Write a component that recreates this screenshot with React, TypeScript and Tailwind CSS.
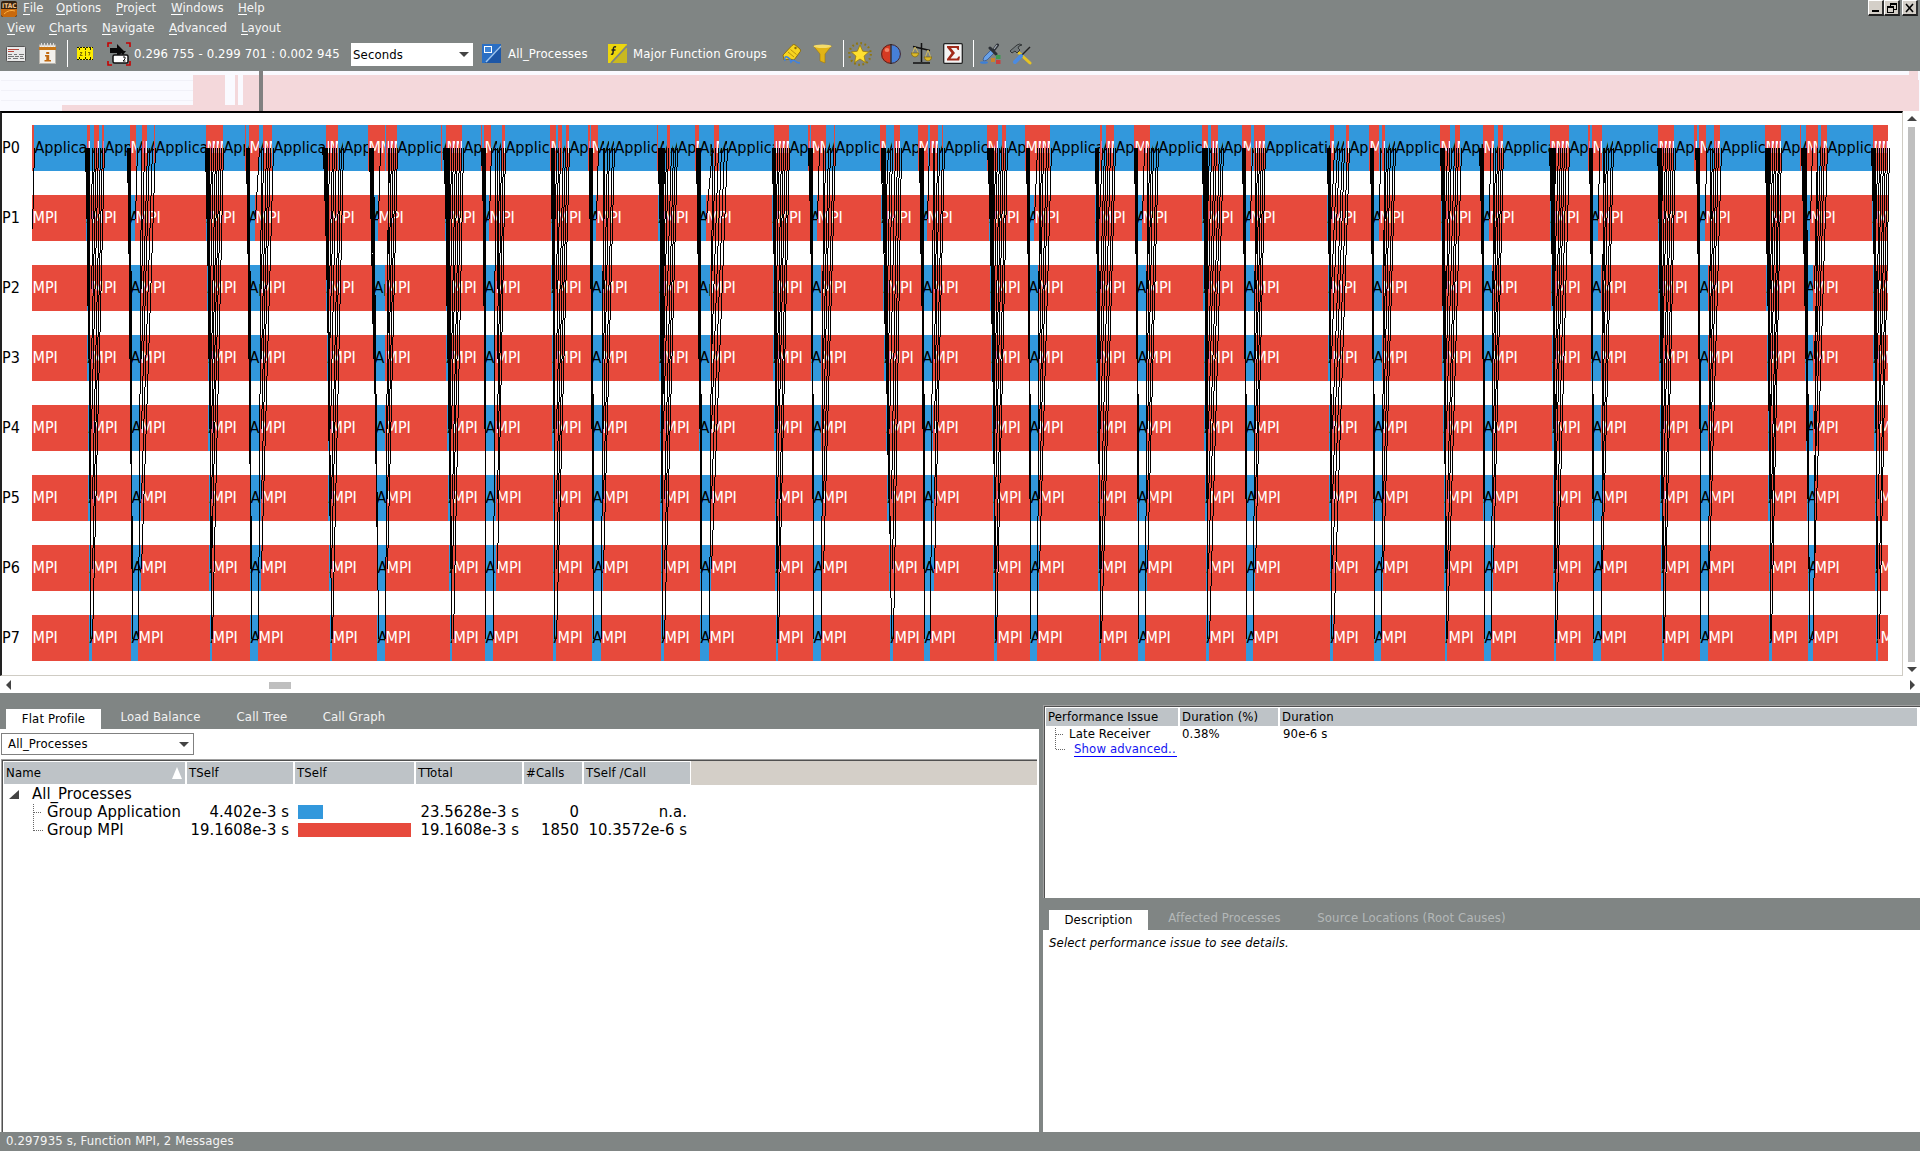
import React from "react";

const RED = "#e74a3c";
const BLUE = "#3298dc";

/* Chart data is expressed in thirds of a pixel along the time axis. */
type Burst = {
  wide?: boolean;
  s: [number, number]; // send bundle on P0
  b: [number, number]; // arrival on P1 .. P7
  r: [number, number]; // returning messages on P0
  c: [number, number]; // departure on P1 .. P7
  p1?: [number, number];
  p7?: [number, number];
};

const n = (o: number, s0: number, s1: number, b0: number, b1: number, r0: number, r1: number, c0: number, c1: number): Burst => ({
  s: [o + s0, o + s1], b: [o + b0, o + b1], r: [o + r0, o + r1], c: [o + c0, o + c1],
});
const w = (o: number, s0: number, s1: number, b0: number, b1: number, p1a: number, p1b: number, p7a: number, p7b: number, r0: number, r1: number, c: number): Burst => ({
  wide: true, s: [o + s0, o + s1], b: [o + b0, o + b1], p1: [o + p1a, o + p1b], p7: [o + p7a, o + p7b], r: [o + r0, o + r1], c: [o + c, o + c],
});

const bursts: Burst[] = [
  n(0, 254, 268, 262, 271, 275, 312, 272, 276),
  w(0, 380, 390, 387, 395, 410, 406, 424, 415, 432, 464, 424),
  n(0, 614, 628, 622, 633, 634, 670, 630, 635),
  w(0, 737, 747, 742, 752, 778, 764, 782, 773, 790, 818, 784),
  n(0, 966, 982, 980, 992, 988, 1030, 985, 995),
  w(0, 1106, 1118, 1114, 1133, 1140, 1134, 1163, 1154, 1166, 1192, 1160),
  n(0, 1328, 1348, 1337, 1352, 1352, 1388, 1350, 1358),
  w(1440, 4, 14, 10, 16, 33, 27, 46, 40, 52, 75, 50),
  n(1440, 212, 222, 216, 223, 228, 268, 226, 229),
  w(1440, 326, 336, 330, 338, 355, 349, 370, 363, 372, 402, 370),
  n(1440, 534, 548, 538, 547, 553, 590, 548, 552),
  w(1440, 648, 660, 652, 662, 695, 678, 697, 688, 705, 740, 694),
  n(1440, 875, 886, 880, 890, 892, 928, 888, 894),
  w(1440, 985, 996, 990, 1000, 1018, 1012, 1030, 1022, 1036, 1066, 1028),
  n(1440, 1203, 1215, 1206, 1234, 1225, 1262, 1216, 1240),
  w(1440, 1316, 1328, 1322, 1332, 1348, 1342, 1358, 1350, 1362, 1392, 1362),
  n(2880, 82, 100, 90, 106, 104, 140, 102, 108),
  w(2880, 198, 206, 202, 211, 230, 222, 238, 230, 242, 272, 238),
  n(2880, 404, 414, 408, 420, 426, 464, 418, 424),
  w(2880, 521, 531, 526, 534, 552, 546, 562, 555, 566, 594, 562),
  n(2880, 726, 742, 730, 742, 747, 790, 742, 746),
  w(2880, 845, 855, 850, 859, 875, 871, 886, 879, 890, 916, 886),
  n(2880, 1100, 1110, 1104, 1114, 1122, 1168, 1112, 1118),
  w(2880, 1229, 1239, 1234, 1242, 1260, 1256, 1272, 1264, 1278, 1304, 1270),
  n(4320, 0, 12, 6, 18, 20, 62, 16, 22),
  w(4320, 118, 130, 124, 132, 150, 146, 160, 154, 166, 190, 160),
  n(4320, 328, 342, 334, 345, 346, 386, 342, 348),
  w(4320, 446, 456, 450, 459, 478, 474, 488, 482, 492, 518, 487),
  n(4320, 652, 664, 656, 668, 668, 704, 664, 672),
  w(4320, 766, 778, 774, 781, 798, 795, 810, 803, 815, 842, 808),
  n(4320, 974, 986, 980, 991, 990, 1024, 988, 994),
  w(4320, 1084, 1098, 1090, 1106, 1115, 1110, 1130, 1120, 1132, 1160, 1122),
  n(4320, 1294, 1306, 1300, 1310, 1312, 1346, 1308, 1318),
];

const p0Red: [number, number][] = [
  ...([[96, 101], [261, 270], [282, 298], [306, 312], [390, 408], [426, 441], [461, 465], [618, 669], [736, 738], [747, 777], [789, 816], [978, 1014], [1104, 1155], [1158, 1191], [1323, 1326], [1338, 1386]] as [number, number][]),
  ...([[3, 5], [12, 33], [66, 75], [210, 228], [234, 246], [258, 267], [324, 330], [333, 354], [531, 534], [561, 570], [645, 657], [702, 717], [882, 927], [984, 990], [993, 1038], [1062, 1065], [1200, 1218], [1242, 1260], [1314, 1344], [1350, 1374], [1386, 1389]].map(([a, b]) => [a + 1440, b + 1440]) as [number, number][]),
  ...([[81, 114], [126, 138], [195, 270], [420, 426], [438, 462], [522, 570], [726, 744], [753, 774], [846, 873], [882, 915], [1110, 1122], [1158, 1167], [1227, 1257], [1266, 1275]].map(([a, b]) => [a + 2880, b + 2880]) as [number, number][]),
  ...([[0, 30], [45, 60], [129, 162], [174, 189], [330, 387], [444, 450], [456, 486], [654, 702], [762, 771], [777, 798], [822, 840], [975, 1023], [1080, 1084], [1098, 1134], [1143, 1161], [1299, 1344]].map(([a, b]) => [a + 4320, b + 4320]) as [number, number][]),
];

const T0 = 96;
const T1 = 5664;
const lerp = (a: number, b: number, t: number) => a + (b - a) * t;
const px = (v: number) => Math.round(v / 3);

type Piece = { x: number; e: number; red: boolean; label: boolean };

function processZero(): Piece[] {
  const isRed = (v: number) => p0Red.some(([a, b]) => v >= a && v < b);
  const cuts = new Set<number>([T0, T1]);
  p0Red.forEach(([a, b]) => { cuts.add(a); cuts.add(b); });
  bursts.forEach((q) => {
    const stops = q.wide ? 3 : 4;
    for (let i = 0; i < stops; i++) cuts.add(Math.round(lerp(q.r[0], q.r[1], i / (stops - 1))));
    if (q.p1) cuts.add(q.p1[0]);
  });
  const list = [...cuts].filter((v) => v >= T0 && v <= T1).sort((a, b) => a - b);
  const out: Piece[] = [];
  for (let i = 0; i < list.length - 1; i++) {
    out.push({ x: list[i], e: list[i + 1], red: isRed(list[i]), label: list[i + 1] - list[i] > 5 });
  }
  return out;
}

function processRow(k: number): Piece[] {
  const t = (k - 1) / 6;
  const out: Piece[] = [];
  let at = T0;
  bursts.forEach((q) => {
    const arrive = lerp(q.b[0], q.b[1], t);
    let from: number;
    let to: number;
    if (q.wide) {
      from = arrive + (k === 7 ? -1 : 1);
      to = k === 1 ? q.p1![1] : k === 7 ? q.p7![1] : q.c[0] - (k > 4 ? 1 : 4);
    } else {
      from = arrive - 3;
      to = arrive + 4;
    }
    out.push({ x: at, e: from, red: true, label: true });
    out.push({ x: from, e: to, red: false, label: true });
    if (q.wide) at = to;
    else {
      const next = Math.max(to, lerp(q.c[0], q.c[1], t) + 1);
      out.push({ x: to, e: next, red: true, label: false });
      at = next;
    }
  });
  out.push({ x: at, e: T1, red: true, label: true });
  return out;
}

function labelFor(red: boolean, width: number) {
  const name = red ? "MPI" : "Application";
  return name.slice(0, width < 9 ? 1 : Math.ceil(width / 7.2));
}

function Bars({ pieces, y }: { pieces: Piece[]; y: number }) {
  return (
    <g>
      {pieces.map((p, i) => {
        const x = px(p.x);
        const width = px(p.e) - x;
        return width > 0 ? <rect key={i} x={x} y={y} width={width} height={46} fill={p.red ? RED : BLUE} /> : null;
      })}
      {pieces.map((p, i) => {
        const x = px(p.x);
        const width = px(p.e) - x;
        return p.label && width > 1 ? (
          <svg key={i} x={x} y={y} width={width} height={46} overflow="hidden">
            <text x={0.5} y={28} fill={p.red ? "#fff" : "#000"}>{labelFor(p.red, width)}</text>
          </svg>
        ) : null;
      })}
    </g>
  );
}

/* One-pixel stepped line: a vertical run for each pixel column it crosses. */
function steps(a: number, y1: number, b: number, y2: number) {
  const x1 = Math.round(a / 3);
  const x2 = Math.round(b / 3);
  const count = Math.abs(x2 - x1);
  const dir = Math.sign(x2 - x1);
  if (!count) return `M${x1 + 0.5} ${y1}V${y2}`;
  let d = "";
  let y = y1;
  for (let i = 0; i <= count; i++) {
    const next = i === count ? y2 : Math.round(y1 + ((y2 - y1) * (i + 0.5)) / count);
    d += `M${x1 + dir * i + 0.5} ${y}V${next}`;
    y = next;
  }
  return d;
}

function Messages() {
  const d: string[] = [steps(101, 148, 97, 229)];
  bursts.forEach((q) => {
    for (let k = 1; k <= 7; k++) {
      const t = (k - 1) / 6;
      const y = 149 + 70 * k;
      d.push(steps(lerp(q.s[0], q.s[1], t), 148, lerp(q.b[0], q.b[1], t), y));
      if (q.wide) {
        if (k === 1) d.push(steps(q.p1![0], 148, q.p1![1], y));
        else if (k === 7) d.push(steps(q.p7![0], 148, q.p7![1], y));
        else d.push(steps(lerp(q.r[0], q.r[1], (k - 2) / 4), 148, q.c[0], y));
      } else d.push(steps(lerp(q.r[0], q.r[1], t), 148, lerp(q.c[0], q.c[1], t), y));
    }
  });
  return <path d={d.join("")} stroke="#000" strokeWidth={1} fill="none" shapeRendering="crispEdges" />;
}

function Timeline() {
  return (
    <svg width={1900} height={563} viewBox="2 113 1900 563" className="block text-[16px] tracking-normal">
      <g shapeRendering="crispEdges">
        {[0, 1, 2, 3, 4, 5, 6, 7].map((k) => (
          <g key={k}>
            <text x={2} y={153 + 70 * k} fill="#000">P{k}</text>
            <Bars pieces={k === 0 ? processZero() : processRow(k)} y={125 + 70 * k} />
          </g>
        ))}
      </g>
      <Messages />
    </svg>
  );
}

function Overview() {
  return (
    <svg width={1920} height={40} viewBox="0 71 1920 40" className="block" shapeRendering="crispEdges">
      <rect x={0} y={71} width={1920} height={40} fill="#fafaff" />
      <path d="M1 80.5H193M1 90.5H193M1 100.5H193" stroke="#f1f1f8" />
      <path d="M62 111V105H193V75H225V105H235V75H238V105H243V75H1909V71H1918V80H1919V111Z" fill="#f4d8db" />
      <rect x={259} y={71} width={4} height={40} fill="#808080" />
    </svg>
  );
}

function MenuItem({ text, className }: { text: string; className: string }) {
  return (
    <span className={`absolute top-0 whitespace-nowrap ${className}`}>
      <span className="relative">{text[0]}<i className="absolute right-0 bottom-0 left-0 h-px bg-white" /></span>
      {text.slice(1)}
    </span>
  );
}

function WinButton({ children, className }: { children: React.ReactNode; className: string }) {
  return (
    <div className={`h-4 w-4 border-t border-r-2 border-b-2 border-l border-t-white border-r-[#303030] border-b-[#202020] border-l-white bg-[#d4cfc8] ${className}`}>
      <svg width="13" height="13" viewBox="0 0 13 13" fill="none" stroke="#000" shapeRendering="crispEdges">{children}</svg>
    </div>
  );
}

const Sep = ({ className }: { className: string }) => <div className={`h-[27px] w-px shrink-0 bg-white ${className}`} />;

function Icon({ w: width, h, className = "", children }: { w: number; h: number; className?: string; children: React.ReactNode }) {
  return <svg width={width} height={h} viewBox={`0 0 ${width} ${h}`} className={`block shrink-0 ${className}`}>{children}</svg>;
}

function Toolbar() {
  return (
    <div className="flex h-[35px] items-center text-white">
      <Icon w={20} h={16} className="ml-[6px]">
        <rect x="0.5" y="0.5" width="19" height="15" rx="1" fill="#e9e9e9" stroke="#555" />
        <path d="M2 3.5h11M2 5.5h6" stroke="#b8483c" />
        <path d="M2 8.5h4m2 0h3m2 0h5M2 10.5h6m1 0h4m1 0h3M2 12.5h3m2 0h5m2 0h4" stroke="#777" />
      </Icon>
      <Icon w={17} h={21} className="ml-[13px]">
        <rect x="0.5" y="2" width="16" height="18.5" fill="#f3f1ec" stroke="#b9b5ad" />
        <rect x="0" y="4" width="17" height="3" fill="#c97716" />
        <path d="M2.5 0v4m3-4v4m3-4v4m3-4v4m3-4v4" stroke="#ddd" />
        <path d="M7.2 9h3v2h-3zM6 12h4.2v5H12v1.500H5.500V17h1.800v-3.500H6z" fill="#c26a10" />
      </Icon>
      <Sep className="ml-[11px]" />
      <Icon w={16} h={13} className="ml-[9px]">
        <rect width="16" height="13" fill="#ffee00" />
        <path d="M0 .5h16M0 12.500h16" stroke="#1c1a00" strokeDasharray="2 1" />
        <path d="M2.500 1v2M13.500 1v2M8.500 1v2M2.500 10v2M13.500 10v2M8.500 10v2" stroke="#222000" />
        <path d="M8.500 4v5M3 5.500h2l-2 3h2.500M11 5.500h2l-1 3" stroke="#7a6c00" fill="none" />
      </Icon>
      <Icon w={24} h={24} className="ml-[14px]">
        <path d="M1 5V1h4M19 1h4v4M1 19v4h4M19 23h4v-4" fill="none" stroke="#c80000" strokeWidth="1.600" />
        <path d="M3 6h7V2l7 7-7 6v-4H3z" fill="#0a0a0a" />
        <rect x="6" y="13" width="15" height="8" rx="1.500" fill="#fff" stroke="#111" strokeWidth="1.500" />
        <path d="M16 15h2v2l-2 2h2.500" stroke="#111" fill="none" />
        <path d="M12 9l4 4 3-4z" fill="#0a0a0a" />
      </Icon>
      <span className="ml-[3px] w-[217px] whitespace-nowrap">0.296 755 - 0.299 701 : 0.002 945</span>
      <div className="mt-[2px] flex h-[23px] w-[122px] items-center justify-between bg-white pr-1 pl-[2px] text-black">
        Seconds
        <i className="h-0 w-0 border-x-[5px] border-t-[5px] border-x-transparent border-t-[#444]" />
      </div>
      <Icon w={19} h={19} className="ml-[9px]">
        <rect width="19" height="19" fill="#2a6fc4" />
        <path d="M19 0v19H3z" fill="#1d57a6" />
        <path d="M4 18L19 2" stroke="#9cc4ee" strokeWidth="1.500" />
        <rect x="2.500" y="2.500" width="7" height="6" fill="#3c83d6" stroke="#fff" />
      </Icon>
      <span className="ml-[7px] w-[100px]">All_Processes</span>
      <Icon w={19} h={19}>
        <rect width="19" height="19" fill="#ecd60e" />
        <path d="M19 0v19H3z" fill="#c9b820" />
        <path d="M3 19L19 2" stroke="#808584" strokeWidth="1.800" />
        <path d="M8 3Q5.500 2 5.300 5L5 9Q4.500 11 3 10M3.500 6h4" stroke="#222" fill="none" strokeWidth="1.500" />
      </Icon>
      <span className="ml-[6px] w-[149px] whitespace-nowrap">Major Function Groups</span>
      <Icon w={20} h={20}>
        <path d="M10 1.500Q11 0 13 .8L18 5q1 1 .3 2.500L12 16l-4-1-6 1-1-5z" fill="#f6d420" stroke="#8a6a08" strokeWidth=".9" />
        <circle cx="13.500" cy="4" r="1.200" fill="#8a6a08" />
        <path d="M6 8l6 5M8.500 5.500l6 5" stroke="#b08a0c" strokeWidth=".9" />
        <path d="M3 17q-1-5 2-4t4 5q2-3 4-1t5 2" stroke="#3f82e0" strokeWidth="1.500" fill="none" />
      </Icon>
      <Icon w={19} h={20} className="ml-[11px]">
        <path d="M.5 2L7 10v7l5 2v-9l6.500-8z" fill="#e2b416" stroke="#a37b08" strokeWidth=".6" />
        <ellipse cx="9.500" cy="2.300" rx="9" ry="1.800" fill="#f4dc6a" />
      </Icon>
      <Sep className="ml-[11px]" />
      <Icon w={24} h={24} className="ml-[4px]">
        <circle cx="12" cy="12" r="10.800" fill="none" stroke="#8f7610" strokeWidth="2.200" strokeDasharray="1.700 2.541" />
        <path d="M12 3l2.700 6.200 6 .8-4.600 4 1.300 6.500L12 17l-5.400 3.500L7.900 14 3.300 10l6-.8z" fill="#ffe030" stroke="#9c7b08" strokeWidth=".8" />
      </Icon>
      <Icon w={20} h={20} className="ml-[9px]">
        <path d="M9.500 .5a9.500 9.500 0 000 19z" fill="#d53a22" />
        <path d="M10.500 .5a9.500 9.500 0 010 19z" fill="#4680d8" />
        <circle cx="10" cy="10" r="9.400" fill="none" stroke="#4a2420" strokeWidth="1" />
        <path d="M10 0v20" stroke="#202028" strokeWidth="1.200" />
        <ellipse cx="6" cy="6" rx="2.400" ry="2" fill="#f08468" />
      </Icon>
      <Icon w={21} h={21} className="ml-[10px]">
        <path d="M10.500 0v19M2 3.500l17 4M2 20h17" stroke="#111" strokeWidth="1.500" />
        <path d="M4 4L1 11h7zM17 7l-3 8h6z" fill="none" stroke="#d8c05a" strokeWidth=".9" />
        <path d="M0 10h8q-1 4-4 4t-4-4M13 14h8q-1 4-4 4t-4-4" fill="#dcb92a" stroke="#6b5708" strokeWidth=".6" />
      </Icon>
      <Icon w={20} h={21} className="ml-[11px]">
        <rect x=".7" y=".7" width="18.600" height="19.600" rx="1" fill="#f4f4f4" stroke="#222" strokeWidth="1.300" />
        <path d="M4 3h12v4h-1.200L13.500 5H8l4 5-4.500 5.500h6.500l1.500-2H17l-.8 4H4v-1.500L8.500 10 4 4.500z" fill="#a02a1a" />
      </Icon>
      <Sep className="ml-[10px]" />
      <Icon w={21} h={21} className="ml-[6px]">
        <path d="M3 17l1-3 7-7 3 3-7 7-3 1z" fill="#6aa2e8" stroke="#2b4f8c" strokeWidth=".7" />
        <path d="M10 5l6 6M13 8l4.500-6" stroke="#2c3036" strokeWidth="3" strokeLinecap="round" />
        <path d="M14 6l3-4" stroke="#a9b0ba" strokeWidth="1.200" />
        <ellipse cx="4" cy="19.500" rx="4" ry="1.300" fill="#3d7fd6" />
        <rect x="16" y="12" width="4.500" height="4" fill="#3d9a50" />
        <rect x="16" y="17" width="4.500" height="4" fill="#c84040" />
        <rect x="11" y="15" width="4" height="4" fill="#c8842c" />
      </Icon>
      <Icon w={23} h={22} className="ml-[8px]">
        <path d="M9 9l12 11" stroke="#e6c322" strokeWidth="3" strokeLinecap="round" />
        <path d="M1 8l7-6q3-2 5 0l-3 1-1 2 2 2-3 3-2-2-3 2z" fill="#737a7c" stroke="#2b2f30" strokeWidth=".9" />
        <path d="M21 4l-9 9" stroke="#222" strokeWidth="1.500" />
        <path d="M12 13l-6 6" stroke="#4c8be0" strokeWidth="4" strokeLinecap="round" />
      </Icon>
    </div>
  );
}

const HeadCell = ({ children, className = "" }: { children?: React.ReactNode; className?: string }) => (
  <div className={`flex shrink-0 items-center bg-[#bec3c7] pl-[2px] whitespace-nowrap ${className}`}>{children}</div>
);

const Tree = ({ className = "" }: { className?: string }) => (
  <svg width="12" height="30" viewBox="0 0 12 30" className={`absolute ${className}`} stroke="#666" strokeDasharray="1 1" fill="none" shapeRendering="crispEdges">
    <path d="M.5 0V27M1 8.500H9M1 26.500H10" />
  </svg>
);

function FlatProfile() {
  return (
    <div className="flex w-[1039px] shrink-0 flex-col">
      <div className="flex h-9 shrink-0 items-end pl-[6px] text-[#f2f2f2]">
        <div className="flex h-5 w-[95px] items-center justify-center bg-white text-black">Flat Profile</div>
        <div className="flex h-6 w-[119px] items-center justify-center">Load Balance</div>
        <div className="flex h-6 w-[84px] items-center justify-center">Call Tree</div>
        <div className="flex h-6 w-[100px] items-center justify-center">Call Graph</div>
      </div>
      <div className="flex grow flex-col bg-white pt-1 pl-px">
        <div className="flex h-[22px] w-[193px] items-center justify-between border border-[#808080] pr-1 pl-[6px]">
          All_Processes
          <i className="h-0 w-0 border-x-[5px] border-t-[5px] border-x-transparent border-t-[#444]" />
        </div>
        <div className="mt-1 mr-[2px] grow border-t border-l border-[#a0a0a0]">
          <div className="h-full border-t border-l border-[#505050]">
            <div className="flex h-6 bg-[#d4cfc8]">
              <div className="flex gap-[2px] bg-white p-px">
                <HeadCell className="w-[181px] justify-between pr-[3px]">
                  Name
                  <i className="h-0 w-0 border-x-[5px] border-b-[12px] border-x-transparent border-b-white" />
                </HeadCell>
                <HeadCell className="w-[106px]">TSelf</HeadCell>
                <HeadCell className="w-[119px]">TSelf</HeadCell>
                <HeadCell className="w-[106px]">TTotal</HeadCell>
                <HeadCell className="w-[58px]">#Calls</HeadCell>
                <HeadCell className="w-[106px]">TSelf /Call</HeadCell>
              </div>
            </div>
            <div className="relative text-[16.5px] leading-[18px] tracking-[0.07px]">
              <div className="h-[18px] pl-[29px]">
                <svg width="10" height="9" className="absolute top-[5px] left-[6px]"><path d="M10 0V9H0z" fill="#444" /></svg>
                All_Processes
              </div>
              <Tree className="top-[19px] left-[30px]" />
              {[
                ["Group Application", "4.402e-3 s", "23.5628e-3 s", "0", "n.a."],
                ["Group MPI", "19.1608e-3 s", "19.1608e-3 s", "1850", "10.3572e-6 s"],
              ].map((r, i) => (
                <div key={r[0]} className="flex h-[18px] items-center">
                  <span className="w-[183px] pl-11 whitespace-nowrap">{r[0]}</span>
                  <span className="w-[103px] text-right">{r[1]}</span>
                  <span className="w-[126px] pl-[9px]">
                    <i className={i ? "block h-[14px] w-[113px] bg-[#e74a3c]" : "block h-[14px] w-[25px] bg-[#3298dc]"} />
                  </span>
                  <span className="w-[104px] text-right">{r[2]}</span>
                  <span className="w-[60px] text-right">{r[3]}</span>
                  <span className="w-[108px] text-right">{r[4]}</span>
                </div>
              ))}
            </div>
          </div>
        </div>
      </div>
    </div>
  );
}

function Issues() {
  return (
    <div className="ml-1 flex grow flex-col pt-3">
      <div className="h-[193px] shrink-0 border-t border-l border-[#a0a0a0]">
        <div className="h-full border-t border-l border-[#505050] bg-white">
          <div className="flex h-[19px] gap-[2px] pt-px pr-[3px] pl-px">
            <HeadCell className="w-[132px]">Performance Issue</HeadCell>
            <HeadCell className="w-[98px]">Duration (%)</HeadCell>
            <HeadCell className="grow">Duration</HeadCell>
          </div>
          <div className="relative leading-[15px]">
            <svg width="12" height="24" className="absolute top-[2px] left-[10px]" stroke="#666" strokeDasharray="1 1" fill="none" shapeRendering="crispEdges">
              <path d="M.5 0V22M1 6.500H9M1 21.500H10" />
            </svg>
            <div className="flex h-4">
              <span className="w-[137px] pl-6">Late Receiver</span>
              <span className="w-[101px]">0.38%</span>
              <span>90e-6 s</span>
            </div>
            <div className="flex pl-[29px]">
              <span className="h-[15px] w-[103px] border-b border-[#0000ff] leading-[14px] whitespace-nowrap text-[#1414f0]">Show advanced..</span>
            </div>
          </div>
        </div>
      </div>
      <div className="flex h-8 shrink-0 items-end pl-[6px] text-[#b4b8b8]">
        <div className="flex h-5 w-[99px] items-center justify-center bg-white text-black">Description</div>
        <div className="flex h-6 w-[153px] items-center justify-center">Affected Processes</div>
        <div className="flex h-6 w-[221px] items-center justify-center">Source Locations (Root Causes)</div>
      </div>
      <div className="grow bg-white px-[6px] pt-[5px] leading-[15px] italic">Select performance issue to see details.</div>
    </div>
  );
}

export default function App() {
  return (
    <div className="flex h-[1151px] w-[1920px] flex-col overflow-hidden bg-[#808584] text-[13px] leading-[16px] tracking-[0.13px] text-black [font-family:'DejaVu_Sans_Condensed','DejaVu_Sans',sans-serif] [font-stretch:condensed]">
      <div className="relative h-[18px] shrink-0 tracking-normal text-[#f6f6f6]">
        <svg width="16" height="16" className="absolute top-[1px] left-px">
          <rect width="16" height="16" rx="2" fill="#33200e" />
          <path d="M0 8h16v6l-2 2H2l-2-2z" fill="#c8690c" />
          <path d="M3 13q5-5 11-3" stroke="#ffb040" fill="none" />
          <text x="1" y="7" fontSize="6.500" fontWeight="bold" fill="#f4c890">ITAC</text>
        </svg>
        <MenuItem text="File" className="left-[23px]" />
        <MenuItem text="Options" className="left-[56px]" />
        <MenuItem text="Project" className="left-[116px]" />
        <MenuItem text="Windows" className="left-[171px]" />
        <MenuItem text="Help" className="left-[238px]" />
        <div className="absolute top-0 right-[2px] flex">
          <WinButton className=""><path d="M3 10.500h7M3 9.500h7" /></WinButton>
          <WinButton className="mr-[2px]"><path d="M5.500 6V3.500h6v5H9M5 2.500h7M2.500 6.500h6v5h-6zM2 5.500h7" /></WinButton>
          <WinButton className=""><path d="M3 3l7 8M10 3l-7 8" strokeWidth="1.600" shapeRendering="auto" /></WinButton>
        </div>
      </div>
      <div className="relative mt-[2px] h-4 shrink-0 tracking-normal text-[#f6f6f6]">
        <MenuItem text="View" className="left-[7px]" />
        <MenuItem text="Charts" className="left-[49px]" />
        <MenuItem text="Navigate" className="left-[102px]" />
        <MenuItem text="Advanced" className="left-[169px]" />
        <MenuItem text="Layout" className="left-[241px]" />
      </div>
      <Toolbar />
      <Overview />
      <div className="flex h-[565px] shrink-0 bg-white">
        <div className="w-[1903px] shrink-0 overflow-hidden border-t-2 border-r border-b border-l-2 border-t-black border-r-[#cfccc4] border-b-[#cfccc4] border-l-[#222]">
          <Timeline />
        </div>
        <div className="flex grow flex-col items-center pt-[5px]">
          <i className="h-0 w-0 border-x-[5px] border-b-[5px] border-x-transparent border-b-[#444]" />
          <div className="mt-[6px] w-[7px] grow bg-[#bfbfbf]" />
          <i className="mt-[5px] mb-[4px] h-0 w-0 border-x-[5px] border-t-[5px] border-x-transparent border-t-[#444]" />
        </div>
      </div>
      <div className="flex h-[17px] shrink-0 items-center justify-between bg-white pr-[5px] pl-[6px]">
        <i className="h-0 w-0 border-y-[5px] border-r-[5px] border-y-transparent border-r-[#444]" />
        <div className="mt-[2px] mr-auto ml-[258px] h-[7px] w-[22px] bg-[#bfbfbf]" />
        <i className="h-0 w-0 border-y-[5px] border-l-[5px] border-y-transparent border-l-[#444]" />
      </div>
      <div className="flex h-[439px] shrink-0">
        <FlatProfile />
        <Issues />
      </div>
      <div className="flex grow items-center pb-px pl-[6px] text-[#f4f4f4]">0.297935 s, Function MPI, 2 Messages</div>
    </div>
  );
}
